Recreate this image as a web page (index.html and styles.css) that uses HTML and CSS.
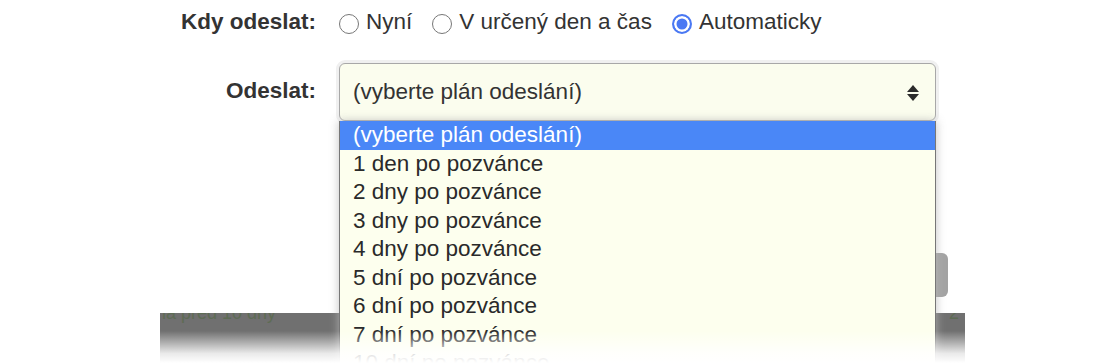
FILE: index.html
```html
<!DOCTYPE html>
<html lang="cs">
<head>
<meta charset="utf-8">
<title>Odeslání</title>
<link rel="stylesheet" href="styles.css">
</head>
<body>
<div class="page">
  <form class="form">
    <div class="label">Kdy odeslat:</div>
    <div class="radios">
      <label class="opt"><input type="radio" name="when" class="radio"><span>Nyní</span></label>
      <label class="opt"><input type="radio" name="when" class="radio"><span>V určený den a čas</span></label>
      <label class="opt"><input type="radio" name="when" class="radio" checked><span>Automaticky</span></label>
    </div>

    <div class="label label-select">Odeslat:</div>
    <div class="select">
      <span class="select-value">(vyberte plán odeslání)</span>
      <svg class="arrows" width="12" height="17" viewBox="0 0 12 17" aria-hidden="true">
        <path d="M0 8 L6 1 L12 8 Z" fill="#2b2b2b"/>
        <path d="M0 10 L12 10 L6 17 Z" fill="#2b2b2b"/>
      </svg>
      <ul class="options">
        <li class="selected">(vyberte plán odeslání)</li>
        <li>1 den po pozvánce</li>
        <li>2 dny po pozvánce</li>
        <li>3 dny po pozvánce</li>
        <li>4 dny po pozvánce</li>
        <li>5 dní po pozvánce</li>
        <li>6 dní po pozvánce</li>
        <li>7 dní po pozvánce</li>
        <li>10 dní po pozvánce</li>
        <li>14 dní po pozvánce</li>
      </ul>
    </div>
  </form>

  <div class="actions">
    <button type="button" class="btn">Uložit</button>
  </div>

  <div class="band">
    <span class="band-text">la před 10 dny</span>
    <span class="band-text band-num">2</span>
  </div>

  <div class="fade"></div>
</div>
</body>
</html>
```

FILE: styles.css
```css
html, body {
  margin: 0;
  padding: 0;
  overflow: hidden;
  background: #fff;
}

.page {
  position: relative;
  width: 1119px;
  height: 363px;
  overflow: hidden;
  font-family: "Liberation Sans", Arial, sans-serif;
  font-size: 22.5px;
  color: #333;
}

.form {
  display: grid;
  grid-template-columns: 316px 597px;
  column-gap: 23px;
  row-gap: 27px;
  padding-top: 8px;
  margin: 0;
}

.label {
  text-align: right;
  font-weight: bold;
  line-height: 28px;
  color: #333;
}

.label-select {
  padding-top: 14px;
}

.radios {
  display: flex;
  align-items: center;
  height: 28px;
  line-height: 28px;
}

.opt {
  display: flex;
  align-items: center;
  margin-right: 20px;
  color: #333;
}

.radio {
  appearance: none;
  -webkit-appearance: none;
  box-sizing: border-box;
  width: 20px;
  height: 20px;
  margin: 4px 7px 0 0;
  border: 1px solid #777;
  border-radius: 50%;
  background: #fff;
}

.radio:checked {
  border: 2px solid #4a78f3;
  background: #4a78f3;
  box-shadow: inset 0 0 0 2.5px #fff;
}

.select {
  position: relative;
  box-sizing: border-box;
  height: 58px;
  display: flex;
  align-items: center;
  padding: 0 16px 0 13px;
  border: 1px solid #a8a8a8;
  border-radius: 6px;
  background: #fbfdee;
  box-shadow: 0 0 0 3px #f0f0f0;
  line-height: 28px;
  color: #333;
}

.arrows {
  margin-left: auto;
  display: block;
}

.options {
  position: absolute;
  z-index: 10;
  top: calc(100% + 1px);
  left: -1px;
  right: -1px;
  margin: 0;
  padding: 0;
  list-style: none;
  border: 1px solid #777;
  border-top: none;
  background: #fdffee;
  box-shadow: 0 0 9px rgba(185, 185, 185, 0.85);
}

.options li {
  line-height: 28.5px;
  padding-left: 13px;
  color: #2a2a2a;
  white-space: nowrap;
}

.options li.selected {
  background: #4a87f7;
  color: #fff;
}

.actions {
  width: 948px;
  display: flex;
  justify-content: flex-end;
  margin-top: 132px;
}

.btn {
  width: 112px;
  height: 44px;
  border: none;
  border-radius: 6px;
  background: #a3a3a3;
  color: #fff;
  font-family: inherit;
  font-size: 20px;
}

.band {
  margin: 16px 0 0 160px;
  width: 805px;
  height: 50px;
  background: #707070;
  overflow: hidden;
  display: flex;
  justify-content: space-between;
  align-items: flex-start;
}

.band-text {
  margin-top: -11px;
  font-size: 18px;
  line-height: 22px;
  color: #5e6c55;
  padding-left: 2px;
}

.band-num {
  padding-right: 6px;
}

.fade {
  position: absolute;
  z-index: 20;
  left: 0;
  right: 0;
  top: 331px;
  height: 32px;
  background: linear-gradient(to bottom, rgba(255, 255, 255, 0) 0%, rgba(255, 255, 255, 0.85) 70%, #fff 100%);
  pointer-events: none;
}
```
